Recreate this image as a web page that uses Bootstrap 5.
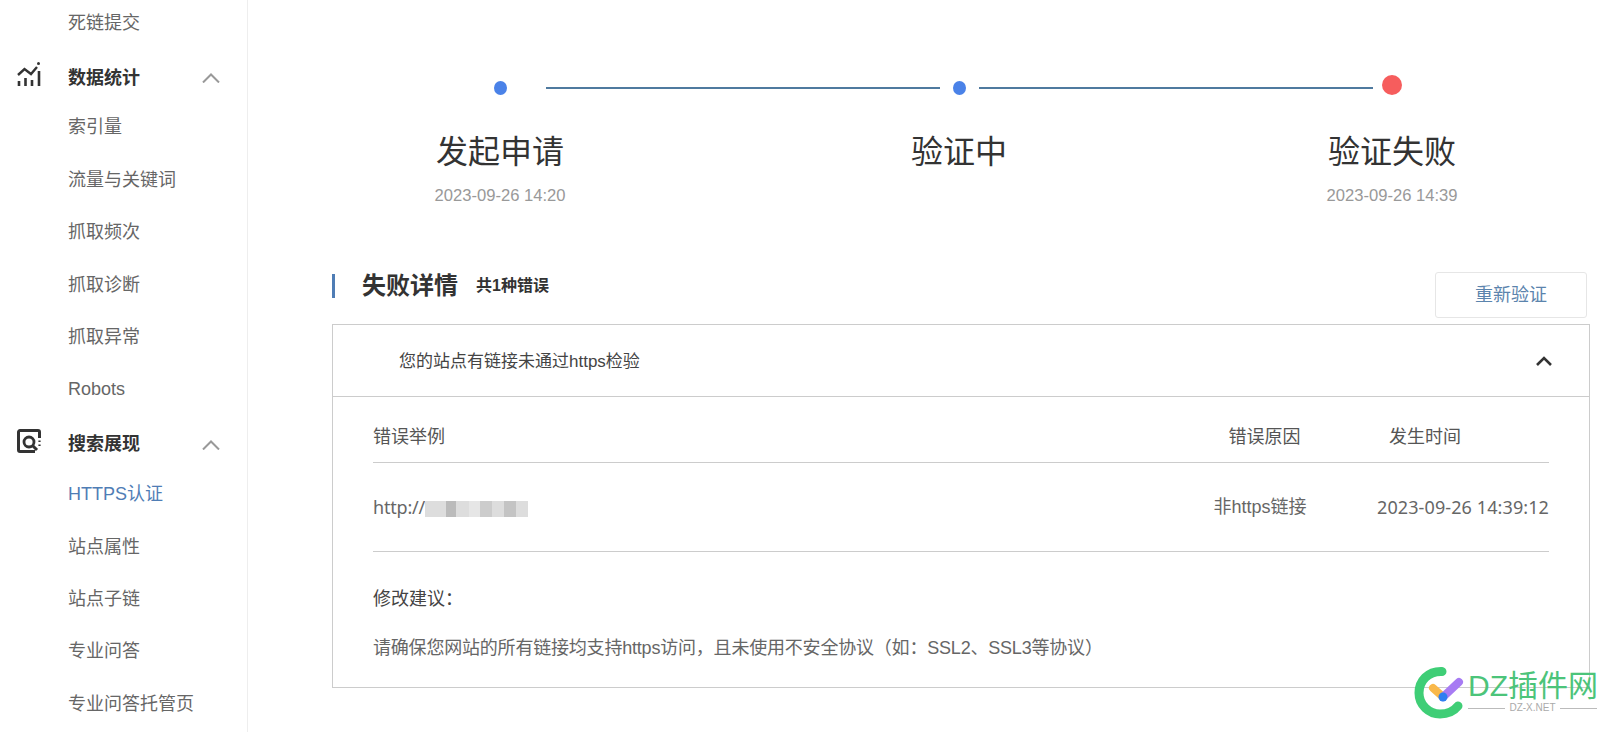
<!DOCTYPE html>
<html lang="zh-CN">

<head>
    <meta charset="UTF-8">
    <meta name="viewport" content="width=device-width, initial-scale=1.0">
    <title>HTTPS认证</title>
    <link href="https://cdn.jsdelivr.net/npm/bootstrap@5.3.0/dist/css/bootstrap.min.css" rel="stylesheet">
    <style>
        html, body { height: 732px; overflow: hidden; }
        body { background: #fff; color: #666; font-family: "Liberation Sans", "Noto Sans CJK SC", sans-serif; font-size: 18px; }

        /* sidebar */
        .side-bar { width: 248px; height: 760px; margin-top: -3px; border-right: 1px solid #eee; flex-shrink: 0; }
        .side-item { height: 52.4px; padding-left: 68px; color: #666; text-decoration: none; display: flex; align-items: center; }
        .side-item.active-item { color: #4f7db5; }
        .side-head { height: 52.4px; margin-top: 2.6px; margin-bottom: -2.6px; color: #333; font-weight: 700; display: flex; align-items: center; position: relative; padding-left: 68px; }
        .side-ico { position: absolute; left: 17px; top: 10px; width: 24px; height: 24px; }
        .side-chev { position: absolute; left: 202px; width: 18px; height: 10px; }

        /* steps */
        .page-main { width: 1258px; margin-left: 84px; flex-shrink: 0; }
        .step-track { height: 40px; margin-top: 68px; padding-left: 161.5px; }
        .step-dot { width: 13px; height: 14px; border-radius: 50%; background: #4a82e8; flex-shrink: 0; }
        .step-dot.dot-fail { width: 20px; height: 20px; background: #f65d5d; margin-left: 9px; margin-bottom: 6px; }
        .step-line { width: 394px; height: 2px; background: #4f7a9f; flex-shrink: 0; }
        .line-a { margin-left: 39.5px; margin-right: 12.5px; }
        .line-b { margin-left: 13.5px; }
        .step-labels { margin-left: 68px; margin-top: 20px; }
        .step-label { width: 200px; text-align: center; flex-shrink: 0; }
        .step-label + .step-label { margin-left: 259px; }
        .step-label + .step-label + .step-label { margin-left: 233px; }
        .step-name { font-size: 32px; line-height: 48px; color: #333; }
        .step-date { height: 24px; margin-top: 8px; font-size: 16.6px; line-height: 24px; color: #999; }

        /* detail */
        .detail-head { margin-top: 65px; height: 46px; }
        .detail-title { height: 24px; margin-top: 1px; padding-left: 27px; border-left: 3px solid #4f7db5; }
        .detail-title b { font-size: 24px; line-height: 24px; color: #333; }
        .detail-count { margin-left: 18px; font-size: 16px; font-weight: 700; color: #333; }
        .btn-retry { width: 152px; height: 46px; margin-top: -1px; margin-right: 3px; padding: 0; font-size: 18px; color: #5b84ad; background: #fff; border: 1px solid #e6e6e6; border-radius: 3px; }
        .detail-card { margin-top: 5px; height: 364px; border: 1px solid #ccc; border-radius: 0; }
        .detail-card .card-header { height: 72px; padding: 0 37px 0 66px; background: #fff; border-bottom: 1px solid #ccc; border-radius: 0; font-size: 17px; color: #444; }
        .head-text { padding-top: 3px; }
        .detail-card .card-body { padding: 0 40px; }
        .err-table { width: 1176px; table-layout: fixed; margin: 0; font-size: 18px; }
        .err-table th, .err-table td { border-bottom: 1px solid #ccc; padding: 0; color: #666; font-weight: 400; }
        .err-table th { padding: 27px 0 11px; line-height: 27px; color: #555; }
        .err-table td { height: 89px; vertical-align: middle; }
        .col-reason { width: 164px; text-align: center; }
        .col-when { width: 204px; }
        .err-table th.col-reason { padding-left: 3px; }
        .err-table td.col-reason { padding-right: 6px; white-space: nowrap; }
        .err-table th.col-when { padding-left: 44px; }
        .err-table td.col-when { text-align: right; white-space: nowrap; font-family: "Noto Sans", sans-serif; letter-spacing: .1px; }
        .url-cell { font-family: "Noto Sans", sans-serif; letter-spacing: -.2px; }
        .blur-url { display: inline-block; width: 103px; height: 16px; vertical-align: -3px; background: linear-gradient(90deg, #ddd 0 20%, #bbb 20% 30%, #ddd 30% 43%, #e6e6e6 43% 53%, #ccc 53% 65%, #ddd 65% 77%, #c4c4c4 77% 88%, #ddd 88%); }
        .tip-title { margin: 34px 0 22px; line-height: 27px; color: #444; }
        .tip-text { margin: 0; line-height: 27px; letter-spacing: -.2px; }

        /* watermark */
        .mark-wrap { position: absolute; left: 1410px; top: 662px; width: 200px; height: 62px; }
        .mark-logo { position: absolute; left: 0; top: 0; width: 58px; height: 60px; }
        .mark-name { position: absolute; left: 58px; top: 8px; font-size: 30px; line-height: 32px; color: #4cc47a; white-space: nowrap; }
        .mark-sub { position: absolute; left: 58px; top: 40px; width: 129px; font-size: 10px; line-height: 12px; color: #aaa; gap: 4px; }
        .mark-sub i { flex: 1; height: 1px; background: #bbb; }
    </style>
</head>

<body>
    <div class="d-flex">
        <nav class="side-bar">
            <a class="side-item" href="#">死链提交</a>
            <div class="side-head">
                <svg class="side-ico" viewBox="0 0 24 24" fill="none" stroke="#333" stroke-width="2.600">
                    <path d="M2 24v-5M8.500 24v-8M15 24v-6M22 24V9"/>
                    <path d="M1 13l6.500-6 6.500 5 6-7" stroke-width="2.400"/>
                    <circle cx="21.500" cy="1.500" r="1.500" fill="#333" stroke="none"/>
                </svg>
                数据统计
                <svg class="side-chev" viewBox="0 0 18 10" fill="none" stroke="#999" stroke-width="2"><path d="M1 9.500L9 1.500l8 8"/></svg>
            </div>
            <a class="side-item" href="#">索引量</a>
            <a class="side-item" href="#">流量与关键词</a>
            <a class="side-item" href="#">抓取频次</a>
            <a class="side-item" href="#">抓取诊断</a>
            <a class="side-item" href="#">抓取异常</a>
            <a class="side-item" href="#">Robots</a>
            <div class="side-head">
                <svg class="side-ico" viewBox="0 0 24 24" fill="none" stroke="#333" stroke-width="3">
                    <path d="M22.500 9V3a1.500 1.500 0 0 0-1.500-1.500H3A1.500 1.500 0 0 0 1.500 3v18A1.500 1.500 0 0 0 3 22.500h15"/>
                    <circle cx="12" cy="13" r="5" stroke-width="2.800"/>
                    <path d="M15.500 16.500l4.500 4.500"/>
                    <path d="M22.500 11.500v1.500M22.500 15.500v1.500" stroke-width="2.200"/>
                </svg>
                搜索展现
                <svg class="side-chev" viewBox="0 0 18 10" fill="none" stroke="#999" stroke-width="2"><path d="M1 9.500L9 1.500l8 8"/></svg>
            </div>
            <a class="side-item active-item" href="#">HTTPS认证</a>
            <a class="side-item" href="#">站点属性</a>
            <a class="side-item" href="#">站点子链</a>
            <a class="side-item" href="#">专业问答</a>
            <a class="side-item" href="#">专业问答托管页</a>
        </nav>

        <main class="page-main">
            <div class="step-track d-flex align-items-center">
                <span class="step-dot"></span>
                <span class="step-line line-a"></span>
                <span class="step-dot"></span>
                <span class="step-line line-b"></span>
                <span class="step-dot dot-fail"></span>
            </div>
            <div class="step-labels d-flex">
                <div class="step-label">
                    <div class="step-name">发起申请</div>
                    <div class="step-date">2023-09-26 14:20</div>
                </div>
                <div class="step-label">
                    <div class="step-name">验证中</div>
                </div>
                <div class="step-label">
                    <div class="step-name">验证失败</div>
                    <div class="step-date">2023-09-26 14:39</div>
                </div>
            </div>

            <div class="detail-head d-flex justify-content-between align-items-start">
                <div class="detail-title d-flex align-items-center">
                    <b>失败详情</b>
                    <span class="detail-count">共1种错误</span>
                </div>
                <button type="button" class="btn btn-retry">重新验证</button>
            </div>

            <div class="card detail-card">
                <div class="card-header d-flex justify-content-between align-items-center">
                    <span class="head-text">您的站点有链接未通过https检验</span>
                    <svg width="16" height="10" viewBox="0 0 16 10" fill="none" stroke="#333" stroke-width="2.600"><path d="M1 9l7-7 7 7"/></svg>
                </div>
                <div class="card-body">
                    <table class="table err-table">
                        <thead>
                            <tr>
                                <th>错误举例</th>
                                <th class="col-reason">错误原因</th>
                                <th class="col-when">发生时间</th>
                            </tr>
                        </thead>
                        <tbody>
                            <tr>
                                <td class="url-cell">http://<span class="blur-url"></span></td>
                                <td class="col-reason">非https链接</td>
                                <td class="col-when">2023-09-26 14:39:12</td>
                            </tr>
                        </tbody>
                    </table>
                    <p class="tip-title">修改建议：</p>
                    <p class="tip-text">请确保您网站的所有链接均支持https访问，且未使用不安全协议（如：SSL2、SSL3等协议）</p>
                </div>
            </div>
        </main>
    </div>

    <div class="mark-wrap">
        <svg class="mark-logo" viewBox="0 0 58 60" fill="none" stroke-linecap="round">
            <path d="M32 9.500C18 9 9 19 9 31s10 21 21 21c8 0 14-3 18-8" stroke="#3fce76" stroke-width="9"/>
            <path d="M23 26l9 8" stroke="#f9b84a" stroke-width="8"/>
            <path d="M33 35l16-15" stroke="#a77bf3" stroke-width="8"/>
            <circle cx="33" cy="35" r="4.500" fill="#2f7ff0"/>
        </svg>
        <div class="mark-name">DZ插件网</div>
        <div class="mark-sub d-flex align-items-center"><i></i>DZ-X.NET<i></i></div>
    </div>
</body>

</html>
